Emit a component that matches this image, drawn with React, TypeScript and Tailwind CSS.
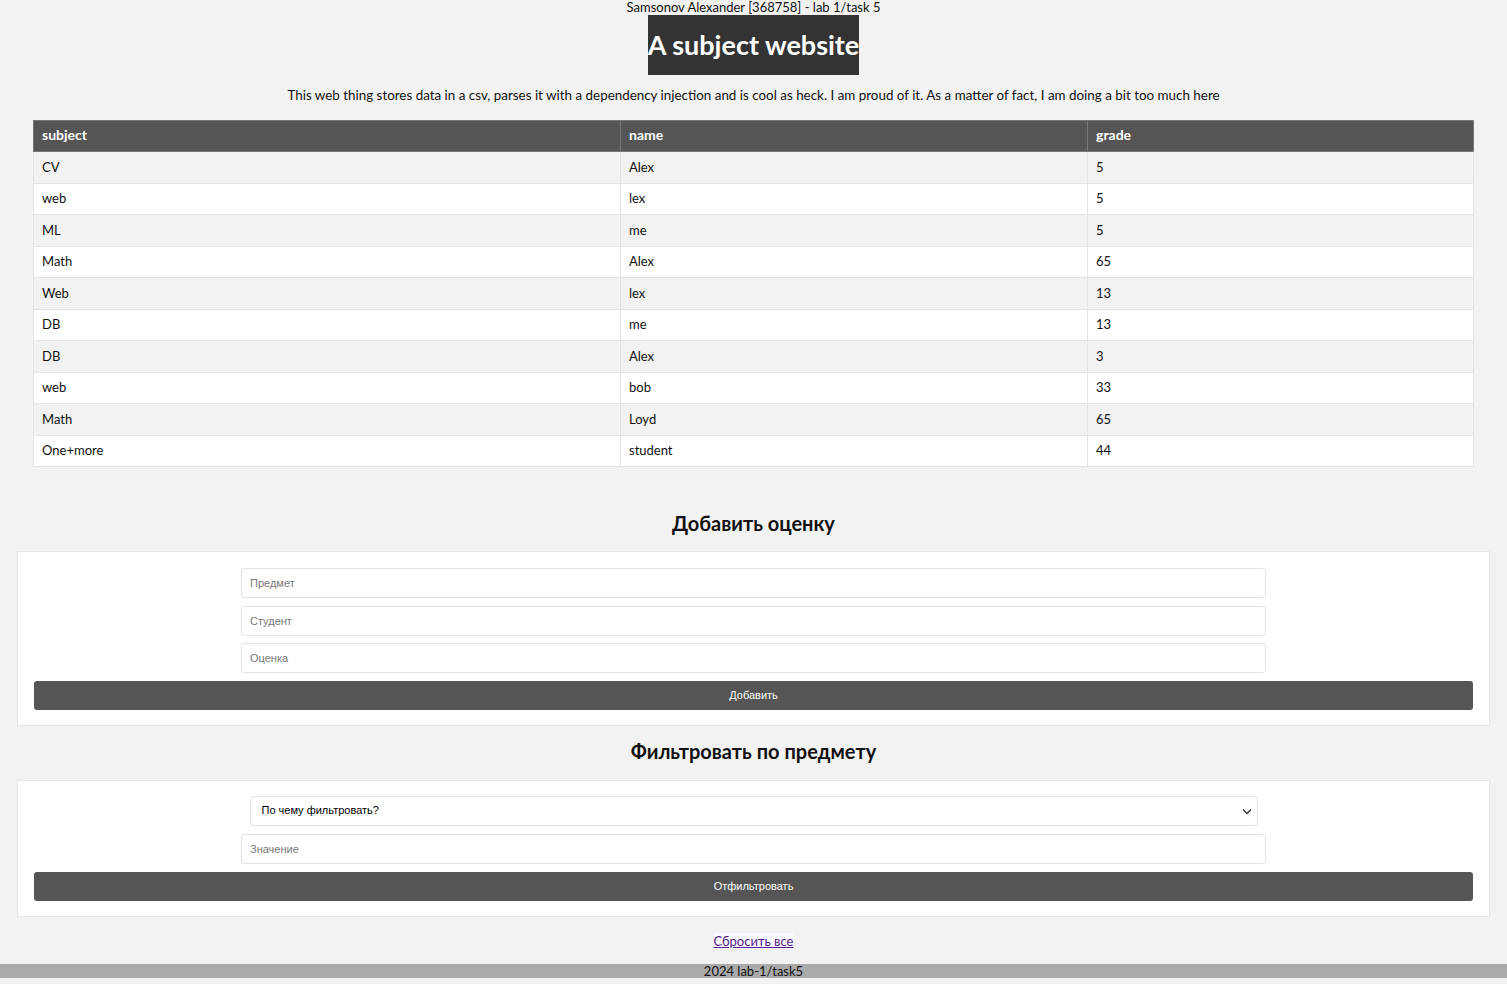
import React from "react";

const rows: [string, string, string][] = [
  ["CV", "Alex", "5"],
  ["web", "lex", "5"],
  ["ML", "me", "5"],
  ["Math", "Alex", "65"],
  ["Web", "lex", "13"],
  ["DB", "me", "13"],
  ["DB", "Alex", "3"],
  ["web", "bob", "33"],
  ["Math", "Loyd", "65"],
  ["One+more", "student", "44"],
];

const inputCls =
  "block w-[1025px] h-[30px] mx-auto bg-white border border-[#e3e3e3] rounded-[3px] px-2 text-[11px] text-[#333] placeholder:text-[#777] outline-none";

export default function App() {
  return (
    <div
      className="min-h-[984px] bg-[#f2f2f2] text-[#111] flex flex-col"
      style={{ fontFamily: "Lato, 'Noto Sans', sans-serif" }}
    >
      <div className="text-center text-[13px] leading-[15px]">Samsonov Alexander [368758] - lab 1/task 5</div>
      <div className="flex justify-center">
        <h1 className="bg-[#333] text-white font-bold text-[27px] whitespace-nowrap h-[60px] px-0 flex items-center justify-center">
          A subject website
        </h1>
      </div>
      <p className="text-center text-[13.4px] mt-[13px] leading-[15px]">
        This web thing stores data in a csv, parses it with a dependency injection and is cool as heck. I am proud of it. As a matter of fact, I am doing a bit too much here
      </p>
      <div className="px-[33px] mt-[17px]">
        <table className="w-full border-collapse text-[13px]">
          <thead>
            <tr className="bg-[#555] text-white h-[31px]">
              <th className="text-left font-bold text-[14px] px-2 pb-[3px] w-[587px] border border-[#777]">subject</th>
              <th className="text-left font-bold text-[14px] px-2 pb-[3px] w-[467px] border border-[#777]">name</th>
              <th className="text-left font-bold text-[14px] px-2 pb-[3px] border border-[#777]">grade</th>
            </tr>
          </thead>
          <tbody>
            {rows.map((r, i) => (
              <tr key={i} className={`h-[31.5px] ${i % 2 === 0 ? "bg-[#f2f2f2]" : "bg-white"}`}>
                {r.map((c, j) => (
                  <td key={j} className="px-2 border border-[#e4e4e4]">
                    {c}
                  </td>
                ))}
              </tr>
            ))}
          </tbody>
        </table>
      </div>

      <h2 className="text-center font-bold text-[20px] mt-[44px] leading-[24px]">Добавить оценку</h2>
      <div className="mx-[17px] mt-[16px] bg-white border border-[#e6e6e6] pt-[16px] pb-[15px] px-[16px]" style={{ fontFamily: "'Liberation Sans', Arial, sans-serif" }}>
        <div className="flex flex-col gap-[7.5px]">
          <input className={inputCls} placeholder="Предмет" />
          <input className={inputCls} placeholder="Студент" />
          <input className={inputCls} placeholder="Оценка" />
          <button className="w-full h-[29px] bg-[#555] text-white text-[11px] rounded-[3px]">Добавить</button>
        </div>
      </div>

      <h2 className="text-center font-bold text-[20px] mt-[13px] leading-[24px]">Фильтровать по предмету</h2>
      <div className="mx-[17px] mt-[17px] bg-white border border-[#e6e6e6] pt-[15px] pb-[15px] px-[16px]" style={{ fontFamily: "'Liberation Sans', Arial, sans-serif" }}>
        <div className="flex flex-col gap-[8px]">
          <div className="relative w-[1008px] h-[30px] mx-auto border border-[#e3e3e3] rounded-[3px] bg-white flex items-center px-[11px] text-[11px] text-black">
            По чему фильтровать?
            <svg className="absolute right-[5px] top-[11px]" width="10" height="7" viewBox="0 0 10 7">
              <path d="M1 1.5 L5 5.5 L9 1.5" stroke="#333" strokeWidth="1.3" fill="none" />
            </svg>
          </div>
          <input className={inputCls} placeholder="Значение" />
          <button className="w-full h-[29px] bg-[#555] text-white text-[11px] rounded-[3px]">Отфильтровать</button>
        </div>
      </div>

      <div className="text-center mt-[16px] text-[13px] leading-[16px]">
        <a href="#" className="underline text-[#551a8b] bg-[#f8f8ff]">Сбросить все</a>
      </div>
      <div className="mt-[15px] bg-[#aaa] text-center text-[13px] leading-[14px] h-[14px]">2024 lab-1/task5</div>
    </div>
  );
}
